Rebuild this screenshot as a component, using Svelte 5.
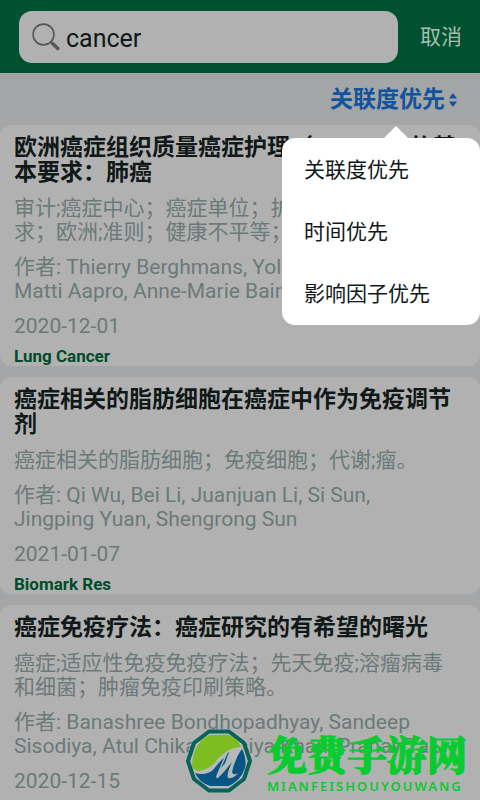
<script>
  let keyword = $state('cancer')
  let menuOpen = $state(true)
  let sort = $state('关联度优先')

  const options = ['关联度优先', '时间优先', '影响因子优先']

  const articles = [
    {
      title: '欧洲癌症组织质量癌症护理（ERQCC）的基本要求：肺癌',
      keywords: '审计;癌症中心；癌症单位；护理组织要\n求；欧洲;准则；健康不平等；肺癌。',
      authors: 'Thierry Berghmans, Yolande Lievens,\nMatti Aapro, Anne-Marie Baird,...',
      date: '2020-12-01',
      journal: 'Lung Cancer'
    },
    {
      title: '癌症相关的脂肪细胞在癌症中作为免疫调节\n剂',
      keywords: '癌症相关的脂肪细胞；免疫细胞；代谢;瘤。',
      authors: 'Qi Wu, Bei Li, Juanjuan Li, Si Sun,\nJingping Yuan, Shengrong Sun',
      date: '2021-01-07',
      journal: 'Biomark Res'
    },
    {
      title: '癌症免疫疗法：癌症研究的有希望的曙光',
      keywords: '癌症;适应性免疫免疫疗法；先天免疫;溶瘤病毒\n和细菌；肿瘤免疫印刷策略。',
      authors: 'Banashree Bondhopadhyay, Sandeep\nSisodiya, Atul Chikara, Asiya Khan, Pranay Ta...',
      date: '2020-12-15',
      journal: ''
    }
  ]

  const choose = option => () => {
    sort = option
    menuOpen = false
  }
</script>

<div class="page">
  <header>
    <label class="search">
      <svg viewBox="0 0 28 28" aria-hidden="true">
        <circle cx="11.5" cy="11.5" r="10.4" />
        <path class="neck" d="M18.6 18.6l2 2" />
        <path class="handle" d="M20.5 20.5l5.3 5" />
      </svg>
      <input type="text" aria-label="搜索" bind:value={keyword} />
    </label>
    <button class="cancel">取消</button>
  </header>

  <div class="toolbar">
    <button class="sort" aria-expanded={menuOpen} onclick={() => (menuOpen = !menuOpen)}>
      {sort}
      <svg viewBox="0 0 8 14" aria-hidden="true">
        <path d="M4 0l4 5.5H0zM4 14l4-5.5H0z" />
      </svg>
    </button>
    {#if menuOpen}
      <div class="menu">
        {#each options as option}
          <button onclick={choose(option)}>{option}</button>
        {/each}
      </div>
    {/if}
  </div>

  <main>
    {#each articles as article}
      <article>
        <h2>{article.title}</h2>
        <p>{article.keywords}</p>
        <p>作者: {article.authors}</p>
        <p>{article.date}</p>
        {#if article.journal}
          <strong>{article.journal}</strong>
        {/if}
      </article>
    {/each}
  </main>

  <div class="watermark">
    <svg viewBox="0 0 68 66" aria-hidden="true">
      <path class="ring" d="M65 32L59 50L44 61.500L24 61.500L9 50L3 32L9 14L24 2.500L44 2.500L59 14Z" />
      <path class="hill" d="M7 38Q7 25 13 16Q18 8 25 6H43Q50 8 54 14L56 18Q46 18 40 24Q33 28 30 34Q24 41 15 42Q10 42 7 38Z" />
      <path class="sea" d="M10 44Q22 48 32 36Q37 27 44 23L36 46L57 20Q62 30 60 39Q56 51 44 57H25Q14 53 10 44Z" />
      <path class="wave" d="M6 40Q10 44 18 41Q27 38 31 32Q37 25 44 21Q41 28 36 39Q46 27 57 19Q50 30 47 43Q48 47 53 44Q49 50 43 49Q41 46 47 33Q40 42 33 49Q30 50 32 45L39 29Q33 34 28 41Q18 49 6 40Z" />
    </svg>
    <div class="brand">
      <span class="name">免费手游网</span>
      <span class="latin">MIANFEISHOUYOUWANG</span>
    </div>
  </div>
</div>

<style>
  :global(body) {
    margin: 0;
    background: #a3a5a6;
  }

  .page {
    position: relative;
    height: 100vh;
    overflow: hidden;
    font-family: Roboto, "Noto Sans CJK SC", sans-serif;
    font-size: 21px;
    line-height: 24px;
    color: #101818;
  }

  button,
  input {
    font: inherit;
    color: inherit;
    padding: 0;
    border: none;
    background: none;
  }

  button {
    cursor: pointer;
  }

  header {
    display: flex;
    align-items: center;
    gap: 22px;
    padding: 11px 18px 10px 19px;
    background: #005130;
  }

  .search {
    flex: 1;
    display: flex;
    align-items: center;
    gap: 6px;
    height: 52px;
    padding: 0 13px;
    box-sizing: border-box;
    border-radius: 13px;
    background: #b1b1b1;
  }

  .search svg {
    width: 28px;
    height: 28px;
    fill: none;
    stroke: #555857;
    stroke-width: 1.6;
  }

  .search .handle {
    stroke-width: 3.4;
    stroke-linecap: round;
  }

  .search input {
    flex: 1;
    min-width: 0;
    padding-top: 3px;
    font-size: 25px;
    line-height: 32px;
    outline: none;
  }

  .cancel {
    color: #a5bfaf;
  }

  .toolbar {
    position: relative;
    display: flex;
    justify-content: flex-end;
    align-items: center;
    height: 52px;
    padding-right: 23px;
  }

  .sort {
    display: flex;
    align-items: center;
    gap: 4px;
    padding-top: 2px;
    font-size: 23px;
    font-weight: 700;
    color: #12549b;
  }

  .sort svg {
    width: 8px;
    height: 14px;
    fill: currentColor;
  }

  .menu {
    position: absolute;
    z-index: 1;
    top: 65px;
    right: 0;
    display: flex;
    flex-direction: column;
    width: 198px;
    padding-top: 1px;
    border-radius: 13px;
    background: #fff;
  }

  .menu::before {
    content: "";
    position: absolute;
    top: -12px;
    right: 72px;
    border: 12px solid transparent;
    border-top: none;
    border-bottom-color: #fff;
  }

  .menu button {
    height: 62px;
    padding-left: 22px;
    text-align: left;
  }

  main {
    display: flex;
    flex-direction: column;
    gap: 11px;
  }

  article {
    padding: 10px 14px 0;
    border-radius: 11px;
    background: #b1b1b1;
    white-space: pre-line;
  }

  article:last-child {
    padding-bottom: 30px;
  }

  h2 {
    margin: 0;
    font-size: 23px;
    font-weight: 700;
    line-height: 25px;
  }

  p {
    margin: 11px 0 0;
    color: #6b7a78;
  }

  strong {
    display: block;
    margin-top: 8px;
    font-size: 17px;
    line-height: 20px;
    color: #004c2a;
  }

  .watermark {
    position: absolute;
    right: 13px;
    bottom: 5px;
    display: flex;
    align-items: center;
    gap: 14px;
    color: #08cb30;
    pointer-events: none;
  }

  .watermark svg {
    width: 68px;
    height: 66px;
  }

  .ring {
    fill: #b5bab8;
    stroke: #07635a;
    stroke-width: 4;
    stroke-linejoin: round;
  }

  .hill {
    fill: #7dbd20;
  }

  .sea {
    fill: #075585;
  }

  .wave {
    fill: #b5bab8;
  }

  .brand {
    display: flex;
    flex-direction: column;
  }

  .name {
    font-family: "Noto Serif CJK SC", "Noto Sans CJK SC", serif;
    font-size: 40px;
    font-weight: 900;
    line-height: 48px;
    -webkit-text-stroke: 1px currentColor;
  }

  .latin {
    font-family: "Noto Sans", sans-serif;
    font-size: 13px;
    font-weight: 600;
    line-height: 18px;
    letter-spacing: 2px;
  }
</style>
